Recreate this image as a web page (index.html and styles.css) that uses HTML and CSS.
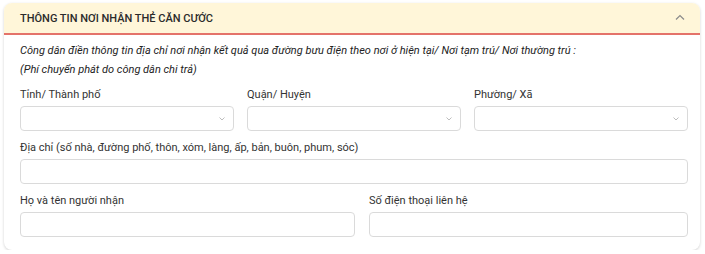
FILE: index.html
```html
<!DOCTYPE html>
<html lang="vi">
<head>
    <meta charset="UTF-8">
    <meta name="viewport" content="width=device-width, initial-scale=1.0">
    <title>Thông tin nơi nhận</title>
    <link rel="stylesheet" href="styles.css">
</head>
<body>
    <div class="card">
        <div class="card-head">
            <span>THÔNG TIN NƠI NHẬN THẺ CĂN CƯỚC</span>
            <svg class="toggle" width="10" height="6" viewBox="0 0 10 6"><path d="M1 5.5 L5 1.5 L9 5.5" fill="none" stroke="#8a8a8a" stroke-width="1.2"/></svg>
        </div>
        <div class="card-body">
            <p class="note">Công dân điền thông tin địa chỉ nơi nhận kết quả qua đường bưu điện theo nơi ở hiện tại/ Nơi tạm trú/ Nơi thường trú :</p>
            <p class="note">(Phí chuyển phát do công dân chi trả)</p>

            <div class="row three">
                <div class="field">
                    <label>Tỉnh/ Thành phố</label>
                    <div class="select"><svg width="6" height="4" viewBox="0 0 6 4"><path d="M0.5 0.5 L3 3 L5.5 0.5" fill="none" stroke="#b5b5b5" stroke-width="0.9"/></svg></div>
                </div>
                <div class="field">
                    <label>Quận/ Huyện</label>
                    <div class="select"><svg width="6" height="4" viewBox="0 0 6 4"><path d="M0.5 0.5 L3 3 L5.5 0.5" fill="none" stroke="#b5b5b5" stroke-width="0.9"/></svg></div>
                </div>
                <div class="field">
                    <label>Phường/ Xã</label>
                    <div class="select"><svg width="6" height="4" viewBox="0 0 6 4"><path d="M0.5 0.5 L3 3 L5.5 0.5" fill="none" stroke="#b5b5b5" stroke-width="0.9"/></svg></div>
                </div>
            </div>

            <div class="row">
                <div class="field">
                    <label>Địa chỉ (số nhà, đường phố, thôn, xóm, làng, ấp, bản, buôn, phum, sóc)</label>
                    <input type="text">
                </div>
            </div>

            <div class="row two">
                <div class="field">
                    <label>Họ và tên người nhận</label>
                    <input type="text">
                </div>
                <div class="field">
                    <label>Số điện thoại liên hệ</label>
                    <input type="text">
                </div>
            </div>
        </div>
    </div>
</body>
</html>
```

FILE: styles.css
```css
*{
    margin: 0;
    padding: 0;
    box-sizing: border-box;
    font-family: Roboto, "Noto Sans", sans-serif;
}

body{
    background: #fff;
    padding: 3px 5px 0 4px;
}

.card{
    width: 696px;
    border-radius: 8px;
    background: #fff;
    box-shadow: 0 1px 3px rgba(0,0,0,0.18);
    overflow: hidden;
}

.card-head{
    height: 32px;
    background: #fff6d9;
    border-bottom: 2px solid #e4736a;
    display: flex;
    align-items: center;
    justify-content: space-between;
    padding: 0 15px 0 16px;
    font-size: 11px;
    font-weight: 500;
    color: #2b2b2b;
}

.toggle{
    margin-bottom: 2px;
}

.card-body{
    padding: 6px 12px 13px 16px;
}

.note{
    font-size: 11px;
    font-style: italic;
    line-height: 19px;
    color: #222;
}

.row{
    margin-top: 9px;
    display: grid;
    grid-template-columns: 1fr;
}

.row.three{
    margin-top: 8px;
    grid-template-columns: repeat(3, 1fr);
    column-gap: 13px;
}

.row.two{
    grid-template-columns: 335px 1fr;
    column-gap: 14px;
}

.field label{
    display: block;
    font-size: 11px;
    line-height: 16px;
    color: #333;
    margin-bottom: 3px;
}

.field input,
.select{
    display: block;
    width: 100%;
    height: 25px;
    border: 1px solid #dadada;
    border-radius: 4px;
    background: #fff;
    outline: 0;
}

.select{
    display: flex;
    align-items: center;
    justify-content: flex-end;
    padding-right: 8px;
}
```
